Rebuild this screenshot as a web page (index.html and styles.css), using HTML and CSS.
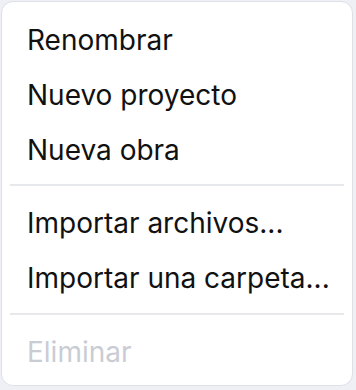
FILE: index.html
```html
<!DOCTYPE html>
<html lang="es">
<head>
  <meta charset="UTF-8">
  <title>Menú</title>
  <link rel="stylesheet" href="styles.css">
</head>
<body>
  <div class="menu">
    <div class="item">Renombrar</div>
    <div class="item">Nuevo proyecto</div>
    <div class="item">Nueva obra</div>
    <div class="sep first"></div>
    <div class="item">Importar archivos...</div>
    <div class="item">Importar una carpeta...</div>
    <div class="sep"></div>
    <div class="item disabled">Eliminar</div>
  </div>
</body>
</html>
```
FILE: styles.css
```css
body {
  margin: 0;
  padding: 1px 3px 0 1px;
  background-color: #eef0f5;
  font-family: Inter, "Noto Sans", sans-serif;
}
.menu {
  background-color: #fff;
  border: 1px solid #dde0e6;
  border-radius: 12px;
  padding: 10px 8px 6px;
  box-sizing: border-box;
  width: 352px;
}
.item {
  height: 55px;
  display: flex;
  align-items: center;
  padding-left: 17px;
  font-size: 28px;
  color: #111;
}
.item.disabled {
  color: #c9cdd3;
}
.sep {
  height: 2px;
  background-color: #e6e8ec;
  margin: 8px 0 9px;
}
.sep.first {
  margin-top: 7px;
}
```
